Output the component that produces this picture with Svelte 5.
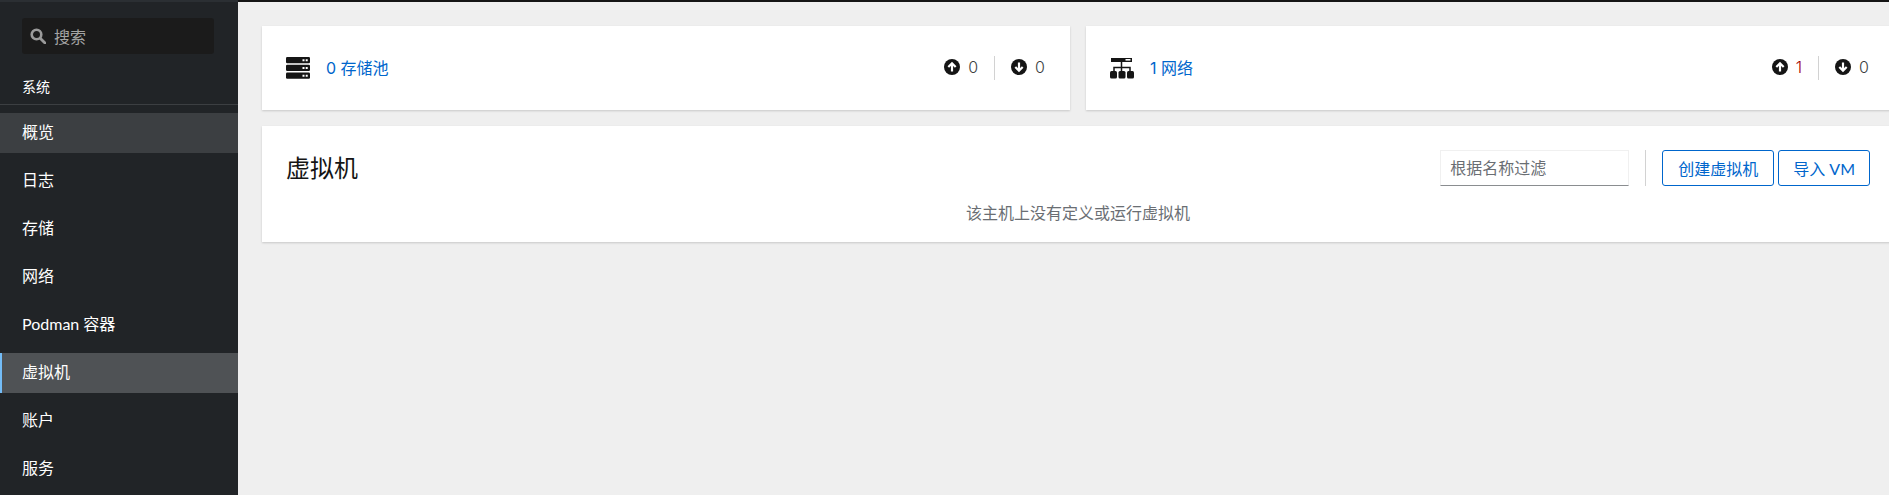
<script>
  const nav = ['概览', '日志', '存储', '网络', 'Podman 容器', '虚拟机', '账户', '服务'];
  const cards = [
    { kind: 'server', label: '0 存储池', up: 0, down: 0 },
    { kind: 'net', label: '1 网络', up: 1, down: 0 }
  ];
</script>

<div class="page">
  <aside class="side">
    <div class="search">
      <svg class="mag" viewBox="0 0 16 16" width="16" height="16"><circle cx="6.500" cy="6.500" r="4.800" fill="none" stroke="#9a9a9a" stroke-width="2.600"/><path d="M10.200 10.200 15 15" stroke="#9a9a9a" stroke-width="2.800" stroke-linecap="round"/></svg>
      <span>搜索</span>
    </div>
    <div class="group">系统</div>
    <nav class="nav">
      {#each nav as item, i}
        <div class="item" class:hover={i === 0} class:active={i === 5}>{item}</div>
      {/each}
    </nav>
  </aside>

  <main class="main">
    <div class="cards">
      {#each cards as c}
        <section class="card status">
          <div class="left">
            {#if c.kind === 'server'}
              <svg class="bigicon" viewBox="0 0 24 22" width="24" height="22">
                <rect x="0" y="0" width="24" height="6.200" rx="1.200" fill="#151515"/>
                <rect x="0" y="7.800" width="24" height="6.200" rx="1.200" fill="#151515"/>
                <rect x="0" y="15.600" width="24" height="6.200" rx="1.200" fill="#151515"/>
                <path d="M16.500 2.200h2v2h-2zM19.700 2.200h2v2h-2zM16.500 10h2v2h-2zM19.700 10h2v2h-2zM16.500 17.800h2v2h-2zM19.700 17.800h2v2h-2z" fill="#fff"/>
              </svg>
            {:else}
              <svg class="bigicon" viewBox="0 0 24 21" width="24" height="21">
                <rect x="1" y="0" width="21" height="4" fill="#151515"/>
                <rect x="15.500" y="1" width="5" height="1.600" fill="#fff"/>
                <path d="M11.500 4v5M4 14V9.500h16V14M11.500 9.500V14" fill="none" stroke="#151515" stroke-width="1.500"/>
                <rect x="0" y="13" width="7" height="7.500" rx="1.500" fill="#151515"/>
                <rect x="8.500" y="13" width="7" height="7.500" rx="1.500" fill="#151515"/>
                <rect x="17" y="13" width="7" height="7.500" rx="1.500" fill="#151515"/>
              </svg>
            {/if}
            <span class="link">{c.label}</span>
          </div>
          <div class="counts">
            <svg class="arrow" viewBox="0 0 16 16" width="16" height="16"><circle cx="8" cy="8" r="8" fill="#151515"/><path d="M8 12.500V4.500M4.300 8 8 4.300 11.700 8" fill="none" stroke="#fff" stroke-width="2.200"/></svg>
            <span class="num" class:err={c.up > 0}>{c.up}</span>
            <span class="vr"></span>
            <svg class="arrow" viewBox="0 0 16 16" width="16" height="16"><circle cx="8" cy="8" r="8" fill="#151515"/><path d="M8 3.500V11.500M4.300 8 8 11.700 11.700 8" fill="none" stroke="#fff" stroke-width="2.200"/></svg>
            <span class="num">{c.down}</span>
          </div>
        </section>
      {/each}
    </div>

    <section class="card vm">
      <div class="vmhead">
        <h2>虚拟机</h2>
        <div class="tools">
          <div class="filter">根据名称过滤</div>
          <span class="vr tall"></span>
          <button class="btn create">创建虚拟机</button>
          <button class="btn import">导入 VM</button>
        </div>
      </div>
      <p class="empty">该主机上没有定义或运行虚拟机</p>
    </section>
  </main>
</div>

<style>
  :global(body) {
    margin: 0;
    overflow: hidden;
    background: #efefef;
  }
  .page {
    display: flex;
    width: 1889px;
    height: 495px;
    overflow: hidden;
    background: #151515;
    padding-top: 2px;
    box-sizing: border-box;
    font-family: "Lato", "Noto Sans CJK SC", sans-serif;
    font-size: 16px;
    color: #151515;
  }
  .side {
    width: 238px;
    flex: none;
    margin-top: -2px;
    background: #212427;
    border-top: 2px solid #2b2f33;
    color: #fff;
    box-sizing: border-box;
  }
  .search {
    display: flex;
    align-items: center;
    gap: 8px;
    margin: 16px 24px 0 22px;
    height: 36px;
    padding-left: 8px;
    background: #1b1b1b;
    border-radius: 3px;
    color: #a4a4a4;
  }
  .mag { flex: none; }
  .group {
    margin-top: 21px;
    height: 29px;
    padding: 0 22px;
    font-size: 14px;
    line-height: 24px;
    border-bottom: 1px solid #3c3f42;
  }
  .nav { margin-top: 8px; }
  .item {
    height: 40px;
    line-height: 38px;
    margin-bottom: 8px;
    padding-left: 22px;
  }
  .item.hover { background: #3c3f42; }
  .item.active {
    background: #4f5255;
    box-shadow: inset 2px 0 0 #73bcf7;
  }
  .main {
    flex: 1;
    min-width: 0;
    background: #efefef;
    padding: 24px 0 0 24px;
  }
  .cards {
    display: flex;
    gap: 16px;
    width: 1632px;
  }
  .card {
    background: #fff;
    box-shadow: 0 1px 2px rgba(3, 3, 3, 0.16);
  }
  .status {
    flex: 1;
    height: 84px;
    padding: 0 25px 0 24px;
    display: flex;
    align-items: center;
    justify-content: space-between;
    box-sizing: border-box;
  }
  .left {
    display: flex;
    align-items: center;
    gap: 16px;
  }
  .link {
    color: #0066cc;
    font-family: "Inter", "Noto Sans CJK SC", sans-serif;
    margin-bottom: 2px;
  }
  .counts {
    display: flex;
    align-items: center;
  }
  .arrow { margin-bottom: 2px; }
  .num {
    margin: 0 0 2px 8px;
    color: #3c3f42;
    font-family: "Inter", sans-serif;
    font-weight: 300;
  }
  .num.err { color: #a30000; }
  .vr {
    width: 1px;
    height: 24px;
    background: #d2d2d2;
    margin: 0 16px;
  }
  .vm {
    width: 1632px;
    height: 116px;
    margin-top: 16px;
    padding: 24px 24px 0;
    box-sizing: border-box;
  }
  .vmhead {
    display: flex;
    align-items: center;
    justify-content: space-between;
    height: 36px;
  }
  h2 {
    margin: 0;
    font-size: 24px;
    font-weight: 400;
    line-height: 36px;
  }
  .tools {
    display: flex;
    align-items: center;
  }
  .filter {
    width: 178px;
    height: 34px;
    line-height: 34px;
    padding-left: 9px;
    border: 1px solid #f0f0f0;
    border-bottom: 1px solid #8a8d90;
    color: #6a6e73;
  }
  .vr.tall {
    height: 36px;
    margin: 0 16px;
  }
  .btn {
    height: 36px;
    padding: 0 15px;
    margin: 0;
    background: #fff;
    border: 1px solid #0066cc;
    border-radius: 3px;
    color: #0066cc;
    font: inherit;
    white-space: nowrap;
  }
  .create { margin-right: 4px; }
  .import { padding: 0 14px; }
  .empty {
    margin: 15px 0 0;
    text-align: center;
    color: #6a6e73;
    line-height: 24px;
  }
</style>
